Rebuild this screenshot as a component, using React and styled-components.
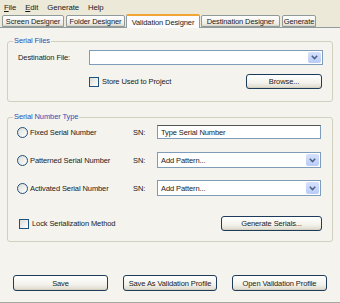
import React from "react";
import styled, { createGlobalStyle } from "styled-components";

const Global = createGlobalStyle`
  html, body { margin: 0; padding: 0; background: #f4f3ee; }
  body {
    font-family: "Liberation Sans", Arial, sans-serif;
    font-size: 7.5px;
    letter-spacing: -0.1px;
    color: #1a1a1a;
  }
  * { box-sizing: border-box; }
`;

const Window = styled.div`
  width: 340px;
  height: 303px;
  display: flex;
  flex-direction: column;
  background: #f4f3ee;
`;

const MenuBar = styled.div`
  height: 14px;
  background: #ece9d8;
  display: flex;
  align-items: center;
  gap: 9px;
  padding-left: 4px;
  font-size: 7.8px;
`;

const MenuItem = styled.span`
  & u { text-decoration: underline; }
`;

const TabStrip = styled.div`
  height: 14px;
  background: #ece9d8;
  display: flex;
  align-items: flex-end;
  padding-left: 2px;
  gap: 2px;
  border-bottom: 1px solid #919b9c;
`;

const Tab = styled.div`
  width: ${(p) => p.$w}px;
  flex: none;
  height: ${(p) => (p.$active ? "14px" : "12px")};
  margin: ${(p) => (p.$active ? "0 -1px -1px -1px" : "0")};
  display: flex;
  align-items: center;
  justify-content: center;
  border: 1px solid #919b9c;
  border-bottom: ${(p) => (p.$active ? "none" : "1px solid #919b9c")};
  border-top: ${(p) => (p.$active ? "2px solid #f1a535" : "1px solid #919b9c")};
  border-radius: 2px 2px 0 0;
  background: ${(p) =>
    p.$active ? "#fcfcfe" : "linear-gradient(#ffffff, #ecebe5 80%, #d8d2bd)"};
  white-space: nowrap;
`;

const Page = styled.div`
  flex: 1;
  display: flex;
  flex-direction: column;
  padding: 0 7px;
  border-bottom: 1px solid #a8a8a0;
`;

const Group = styled.div`
  position: relative;
  margin-top: ${(p) => p.$mt}px;
  height: ${(p) => p.$h}px;
  border: 1px solid #d0d0bf;
  border-radius: 3px;
  padding: ${(p) => p.$pad};
  display: flex;
  flex-direction: column;
`;

const Legend = styled.span`
  position: absolute;
  left: 5px;
  top: -6px;
  padding: 0 1px;
  background: #f4f3ee;
  color: #2a52b8;
  line-height: 10px;
`;

const FileRow = styled.div`
  height: 15px;
  display: grid;
  grid-template-columns: 71px 1fr;
  align-items: center;
`;

const StoreRow = styled.div`
  margin-top: 9px;
  height: 15px;
  display: flex;
  align-items: center;
  padding-left: 71px;
  padding-right: 1px;
`;

const CheckLabel = styled.label`
  display: flex;
  align-items: center;
  gap: 3px;
`;

const Check = styled.span`
  width: 10px;
  height: 10px;
  border: 1px solid #1c5180;
  background: linear-gradient(135deg, #dcdcd6, #ffffff);
  display: inline-block;
`;

const Radio = styled.span`
  width: 11px;
  height: 11px;
  border: 1px solid #1c5180;
  border-radius: 50%;
  background: linear-gradient(135deg, #dcdcd6, #ffffff);
  display: inline-block;
  flex: none;
`;

const Spacer = styled.div`
  flex: 1;
`;

const Button = styled.button`
  width: ${(p) => p.$w}px;
  height: ${(p) => p.$h || 15}px;
  font-family: inherit;
  font-size: 7.5px;
  letter-spacing: -0.1px;
  color: #1a1a1a;
  padding: 0;
  border: 1px solid #1e3b5a;
  border-radius: 3px;
  background: linear-gradient(#ffffff, #f3f2ec 60%, #dcd8cb);
  box-shadow: inset 0 -1px 0 #d6d0c0;
`;

const Combo = styled.div`
  height: ${(p) => p.$h || 15}px;
  border: 1px solid #7f9db9;
  background: #fff;
  display: flex;
  align-items: center;
  justify-content: space-between;
  padding: 1px;
  padding-left: 3px;
`;

const ComboArrow = styled.span`
  width: 13px;
  height: 100%;
  background: linear-gradient(#d6e1fd, #b9ccf7);
  border-radius: 2px;
  display: flex;
  align-items: center;
  justify-content: center;
`;

const TextInput = styled.div`
  height: 14px;
  border: 1px solid #7f9db9;
  border-top-color: #555;
  background: #fff;
  display: flex;
  align-items: center;
  padding-left: 3px;
`;

const SerialRows = styled.div`
  display: flex;
  flex-direction: column;
  gap: 12px;
`;

const SerialRow = styled.div`
  height: 16px;
  display: grid;
  grid-template-columns: 116px 24px 1fr;
  align-items: center;
`;

const RadioLabel = styled.label`
  display: flex;
  align-items: center;
  gap: 2px;
`;

const LockRow = styled.div`
  margin-top: 20px;
  height: 15px;
  display: flex;
  align-items: center;
  padding-left: 2px;
  margin-right: -1px;
`;

const BottomBar = styled.div`
  margin-top: 33px;
  display: flex;
  justify-content: space-between;
  padding: 0 6px;
`;

const Chevron = () => (
  <svg width="7" height="5" viewBox="0 0 7 5">
    <path d="M0.8 0.8 L3.5 3.6 L6.2 0.8" fill="none" stroke="#4d6185" strokeWidth="1.5" />
  </svg>
);

const ComboBox = ({ text, h }) => (
  <Combo $h={h}>
    <span>{text}</span>
    <ComboArrow>
      <Chevron />
    </ComboArrow>
  </Combo>
);

export default function App() {
  return (
    <Window>
      <Global />
      <MenuBar>
        <MenuItem><u>F</u>ile</MenuItem>
        <MenuItem><u>E</u>dit</MenuItem>
        <MenuItem>Generate</MenuItem>
        <MenuItem>Help</MenuItem>
      </MenuBar>
      <TabStrip>
        <Tab $w={62}>Screen Designer</Tab>
        <Tab $w={59}>Folder Designer</Tab>
        <Tab $w={74} $active>Validation Designer</Tab>
        <Tab $w={79}>Destination Designer</Tab>
        <Tab $w={34}>Generate</Tab>
      </TabStrip>
      <Page>
        <Group $mt={13} $h={61} $pad="8px 9px 0 10px">
          <Legend>Serial Files</Legend>
          <FileRow>
            <span>Destination File:</span>
            <ComboBox text="" />
          </FileRow>
          <StoreRow>
            <CheckLabel>
              <Check />
              Store Used to Project
            </CheckLabel>
            <Spacer />
            <Button $w={76}>Browse...</Button>
          </StoreRow>
        </Group>
        <Group $mt={15} $h={125} $pad="6px 11px 0 9px">
          <Legend>Serial Number Type</Legend>
          <SerialRows>
            <SerialRow>
              <RadioLabel><Radio />Fixed Serial Number</RadioLabel>
              <span>SN:</span>
              <TextInput>Type Serial Number</TextInput>
            </SerialRow>
            <SerialRow>
              <RadioLabel><Radio />Patterned Serial Number</RadioLabel>
              <span>SN:</span>
              <ComboBox text="Add Pattern..." h={16} />
            </SerialRow>
            <SerialRow>
              <RadioLabel><Radio />Activated Serial Number</RadioLabel>
              <span>SN:</span>
              <ComboBox text="Add Pattern..." h={16} />
            </SerialRow>
          </SerialRows>
          <LockRow>
            <CheckLabel>
              <Check />
              Lock Serialization Method
            </CheckLabel>
            <Spacer />
            <Button $w={101}>Generate Serials...</Button>
          </LockRow>
        </Group>
        <BottomBar>
          <Button $w={95} $h={16}>Save</Button>
          <Button $w={94} $h={16}>Save As Validation Profile</Button>
          <Button $w={95} $h={16}>Open Validation Profile</Button>
        </BottomBar>
      </Page>
    </Window>
  );
}
